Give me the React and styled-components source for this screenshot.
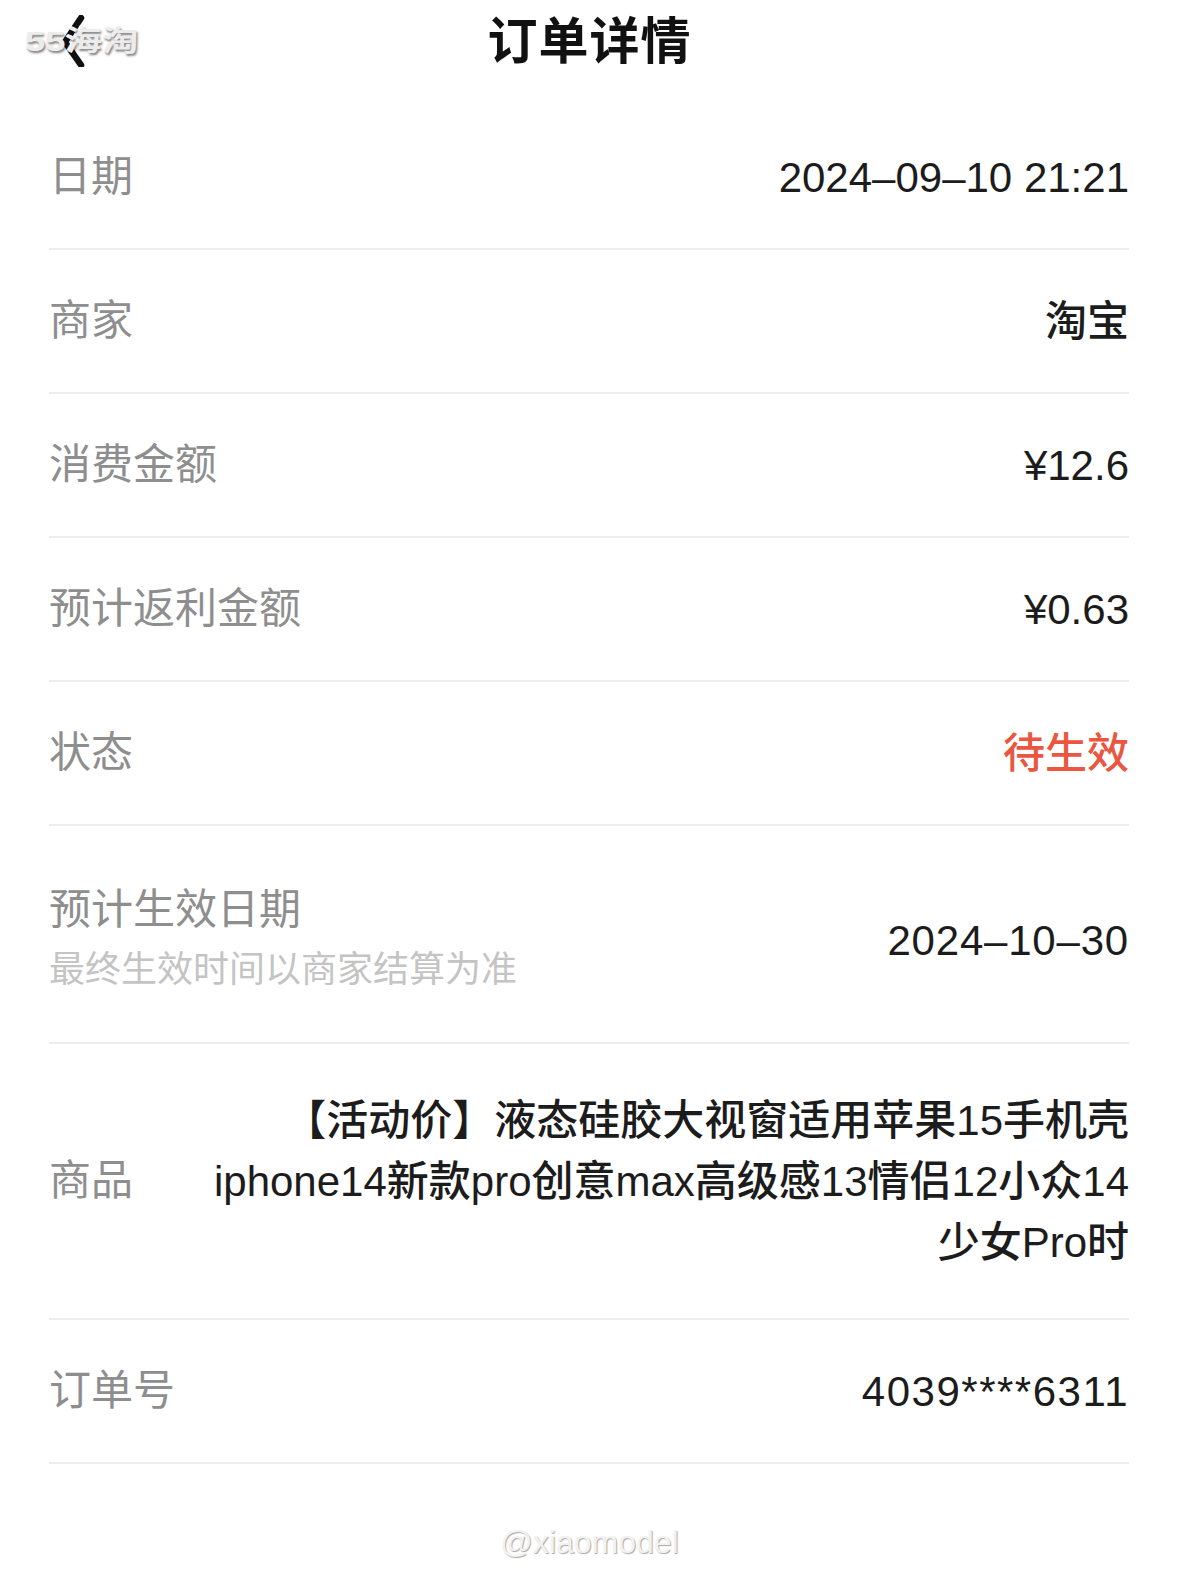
import React from 'react'
import styled, { createGlobalStyle } from 'styled-components';

const GlobalStyle = createGlobalStyle`
  html, body {
    margin: 0;
    padding: 0;
    background: #ffffff;
  }
  body {
    font-family: "Liberation Sans", "Noto Sans CJK SC", sans-serif;
    color: #1c1c1c;
  }
`;

const Page = styled.div`
  position: relative;
  width: 1179px;
  min-height: 1587px;
  background: #fff;
`;
const Header = styled.header`
  display: grid;
  grid-template-columns: 1fr auto 1fr;
  align-items: center;
  height: 82px;
`;
const BackButton = styled.div`
  display: flex;
  align-items: center;
  padding-left: 58px;
  svg {
    display: block;
    flex-shrink: 0;
  }
`;
const Title = styled.h1`
  margin: -8px 0 0;
  font-size: 50px;
  font-weight: 700;
  color: #111;
  letter-spacing: 1px;
`;
const SiteMark = styled.div`
  position: absolute;
  left: 25px;
  top: 28px;
  font-family: "Liberation Sans", "Noto Sans CJK SC", sans-serif;
  font-size: 28px;
  line-height: 28px;
  font-weight: 700;
  color: #ececec;
  transform: scaleX(1.3);
  transform-origin: left center;
  text-shadow: 1px 2px 2px rgba(0, 0, 0, 0.5), -1px -1px 0 #fff;
  pointer-events: none;
`;
const List = styled.div`
  margin: 24px 50px 0 49px;
`;
const Row = styled.div`
  display: flex;
  align-items: center;
  justify-content: space-between;
  box-sizing: border-box;
  min-height: ${p => p.$height || 144}px;
  padding: ${p => p.$pad || '0'};
  border-bottom: 2px solid #ededed;
`;
const LabelBlock = styled.div`
  display: flex;
  flex-direction: column;
  flex-shrink: 0;
`;
const Label = styled.div`
  font-size: 42px;
  line-height: 60px;
  color: #8e8e8e;
  font-weight: 400;
`;
const Note = styled.div`
  font-size: 36px;
  line-height: 60px;
  color: #c4c4c4;
`;
const Value = styled.div`
  font-size: 42px;
  line-height: 61px;
  font-weight: 500;
  text-align: right;
  letter-spacing: ${p => p.$spread || 0}px;
  color: ${p => (p.$alert ? '#ea563f' : '#1c1c1c')};
  margin-left: auto;
`;
const Line = styled.span`
  display: block;
  white-space: nowrap;
`;
const Watermark = styled.div`
  margin-top: 58px;
  text-align: center;
  font-size: 32px;
  line-height: 40px;
  color: #f2f2f2;
  text-shadow: 1px 1px 1px rgba(0, 0, 0, 0.35), -1px -1px 0 #fff;
`;

const rows = [
  { label: '日期', value: '2024–09–10 21:21' },
  { label: '商家', value: '淘宝' },
  { label: '消费金额', value: '¥12.6' },
  { label: '预计返利金额', value: '¥0.63' },
  { label: '状态', value: '待生效', alert: true },
];

function ChevronLeft() {
  return (
    <svg width="30" height="52" viewBox="0 0 30 52">
      <path d="M23 3 L7 27 L23 50" fill="none" stroke="#111" strokeWidth="6.5" strokeLinecap="round" strokeLinejoin="round" />
    </svg>
  );
}

export default function App() {
  return (
    <Page>
      <GlobalStyle />
      <Header>
        <BackButton><ChevronLeft /></BackButton>
        <Title>订单详情</Title>
        <div />
      </Header>
      <SiteMark>55海淘</SiteMark>
      <List>
        {rows.map((r, idx) => (
          <Row key={idx}>
            <Label>{r.label}</Label>
            <Value $alert={r.alert}>{r.value}</Value>
          </Row>
        ))}
        <Row $height={216} $pad="54px 0 42px">
          <LabelBlock>
            <Label>预计生效日期</Label>
            <Note>最终生效时间以商家结算为准</Note>
          </LabelBlock>
          <Value $spread={0.8}>2024–10–30</Value>
        </Row>
        <Row $height={276}>
          <Label>商品</Label>
          <Value>
            <Line>【活动价】液态硅胶大视窗适用苹果15手机壳</Line>
            <Line>iphone14新款pro创意max高级感13情侣12小众14</Line>
            <Line>少女Pro时</Line>
          </Value>
        </Row>
        <Row>
          <Label>订单号</Label>
          <Value $spread={1.5}>4039****6311</Value>
        </Row>
      </List>
      <Watermark>@xiaomodel</Watermark>
    </Page>
  );
}
